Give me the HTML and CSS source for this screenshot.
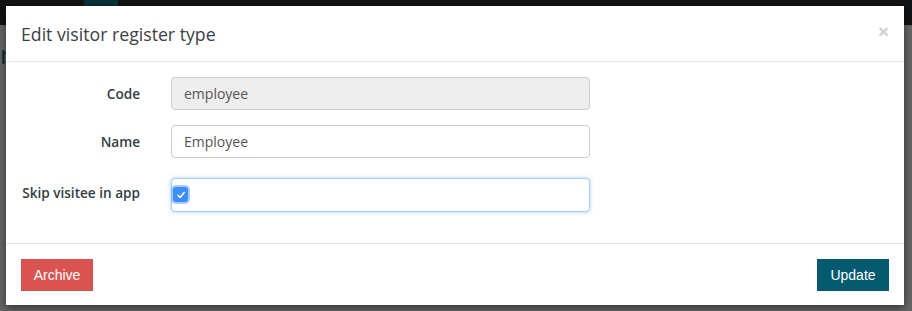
FILE: index.html
```html
<!DOCTYPE html>
<html>
<head>
<meta charset="utf-8">
<link rel="stylesheet" href="styles.css">
</head>
<body>
<div class="page">
  <div class="topbar"><div class="search-btn"></div></div>
  <div class="behind">
    <span class="behind-letter">r</span>
  </div>
</div>
<div class="backdrop"></div>
<div class="modal">
  <div class="modal-header">
    <h4 class="modal-title">Edit visitor register type</h4>
    <span class="close">&times;</span>
  </div>
  <div class="modal-body">
    <div class="form-row">
      <label class="form-label">Code</label>
      <div class="form-field"><input class="form-input readonly" value="employee" readonly></div>
    </div>
    <div class="form-row">
      <label class="form-label">Name</label>
      <div class="form-field"><input class="form-input" value="Employee"></div>
    </div>
    <div class="form-row form-row-check">
      <label class="form-label">Skip visitee in app</label>
      <div class="form-field">
        <div class="form-input check-box focused">
          <span class="checkbox">
            <svg width="10" height="10" viewBox="0 0 10 10"><path d="M2 5.3 L4.1 7.4 L8.2 2.6" fill="none" stroke="#fff" stroke-width="1.5" stroke-linecap="round" stroke-linejoin="round"/></svg>
          </span>
        </div>
      </div>
    </div>
  </div>
  <div class="modal-footer">
    <button class="btn btn-danger">Archive</button>
    <button class="btn btn-primary">Update</button>
  </div>
</div>
</body>
</html>
```
FILE: styles.css
```css
* { box-sizing: border-box; }
html, body { margin: 0; padding: 0; }
body {
  width: 912px;
  height: 311px;
  overflow: hidden;
  background: #fff;
  font-family: "Open Sans", Lato, sans-serif;
  position: relative;
}
.page { width: 912px; height: 311px; }
.topbar {
  height: 25px;
  background: #2b3035;
  position: relative;
}
.search-btn {
  position: absolute;
  left: 84px;
  top: 0;
  width: 34px;
  height: 25px;
  background: #1a7a90;
}
.behind {
  height: 286px;
  background: repeating-linear-gradient(to bottom, #f4f4f4 0, #f4f4f4 1px, #fff 1px, #fff 33px);
  padding-top: 14px;
}
.behind-letter {
  display: inline-block;
  font-size: 26px;
  line-height: 30px;
  color: #127a8e;
}
.backdrop {
  position: absolute;
  inset: 0;
  background: rgba(0,0,0,0.6);
}
.modal {
  position: absolute;
  left: 6px;
  top: 6px;
  width: 898px;
  height: 299px;
  background: #fff;
  box-shadow: 0 3px 9px rgba(0,0,0,0.5);
  color: #333;
}
.modal-header {
  height: 56px;
  border-bottom: 1px solid #e5e5e5;
  display: flex;
  align-items: center;
  justify-content: space-between;
  padding: 0 15px 0 15px;
}
.modal-title {
  margin: 0;
  font-weight: 400;
  font-size: 17.7px;
  color: #3b4046;
}
.close {
  font-family: "Liberation Sans", Arial, sans-serif;
  font-weight: bold;
  font-size: 19px;
  color: #cfcfcf;
  line-height: 1;
  margin-top: -4px;
}
.modal-body {
  padding: 15px 0 0 0;
  height: 181px;
}
.form-row {
  display: flex;
  align-items: center;
  margin-bottom: 15px;
  height: 33px;
}
.form-row-check { align-items: flex-start; height: 35px; margin-top: 20px; }
.form-label {
  width: 134px;
  flex: none;
  text-align: right;
  font-weight: 600;
  font-size: 13.6px;
  color: #333c44;
  white-space: nowrap;
}
.form-row-check .form-label { margin-top: 5px; }
.form-field {
  margin-left: 31px;
  width: 419px;
}
.form-input {
  display: block;
  width: 419px;
  height: 33px;
  padding: 6px 12px;
  border: 1px solid #ccc;
  border-radius: 4px;
  font-family: "Open Sans", Lato, sans-serif;
  font-size: 14px;
  color: #555;
  background: #fff;
  outline: none;
}
.form-input.readonly { background: #eee; }
.check-box {
  height: 34px;
  padding: 0;
  position: relative;
}
.focused {
  border-color: #a9cdef;
  box-shadow: 0 0 4px rgba(102,175,233,0.6);
}
.checkbox {
  position: absolute;
  left: 1px;
  top: 8px;
  width: 15px;
  height: 15px;
  border-radius: 3px;
  background: #3d8ef7;
  box-shadow: 0 0 0 2px rgba(90,160,250,0.55);
  display: flex;
  align-items: center;
  justify-content: center;
}
.checkbox svg { display: block; }
.modal-footer {
  border-top: 1px solid #e5e5e5;
  display: flex;
  justify-content: space-between;
  align-items: flex-start;
  padding: 15px 15px 0 15px;
}
.btn {
  font-family: "Liberation Sans", Arial, sans-serif;
  font-size: 14px;
  color: #fff;
  border: none;
  border-radius: 0;
  height: 32px;
  width: 72px;
  padding: 0;
}
.btn-danger { background: #d9534f; }
.btn-primary { background: #03596e; }
```
